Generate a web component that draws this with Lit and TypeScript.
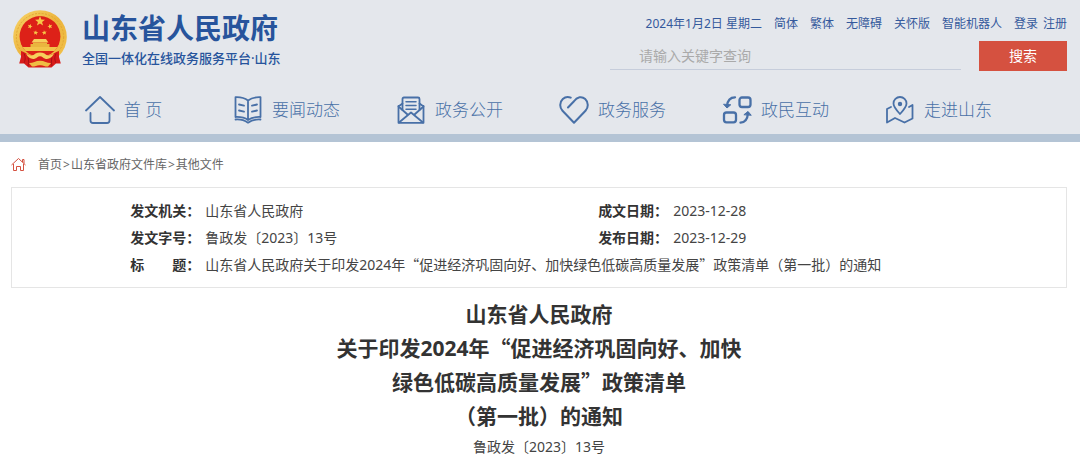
import { LitElement, html, css, svg } from "lit";
import { customElement } from "lit/decorators.js";

const star = (cx: number, cy: number, r: number, turn = 0) => {
  const points = Array.from({ length: 10 }, (_, i) => {
    const radius = i % 2 ? r * 0.42 : r;
    const angle = ((i * 36 - 90 + turn) * Math.PI) / 180;
    return `${(cx + radius * Math.cos(angle)).toFixed(2)},${(cy + radius * Math.sin(angle)).toFixed(2)}`;
  }).join(" ");
  return svg`<polygon points=${points} fill="#f7c948"></polygon>`;
};

const emblem = html`
  <svg class="emblem" viewBox="0 0 54 58" aria-hidden="true">
    <defs>
      <linearGradient id="gold" x1="0" y1="0" x2="1" y2="1">
        <stop offset="0" stop-color="#f8d56a"></stop>
        <stop offset="0.5" stop-color="#ecb43c"></stop>
        <stop offset="1" stop-color="#f3c34b"></stop>
      </linearGradient>
      <clipPath id="disc"><circle cx="27" cy="26.5" r="20.4"></circle></clipPath>
    </defs>
    <circle cx="27" cy="27" r="26.8" fill="url(#gold)"></circle>
    <circle cx="27" cy="27" r="23.6" fill="none" stroke="#e2a732" stroke-width="1" stroke-dasharray="2 1.4"></circle>
    <circle cx="27" cy="26.5" r="20.4" fill="#dd2118"></circle>
    <g clip-path="url(#disc)">
      <path d="M6 37 H48 V41 H6 Z" fill="#f2c44a"></path>
    </g>
    <path d="M20 30.500 L21 29 H33 L34 30.500 L35.500 32.400 H18.500 Z" fill="#f6cf5c"></path>
    <path d="M20 32.400 H34 V34 H36.500 V37 H17.500 V34 H20 Z" fill="#eab53e"></path>
    ${star(27, 11.3, 5.2)} ${star(17, 16.4, 2.6, 18)} ${star(37, 16.4, 2.6, -18)}
    ${star(22.7, 22.7, 2.6, 8)} ${star(31.3, 22.7, 2.6, -8)}
    <path d="M8 41 C11 41.500 14 44 17 45.500 H37 C40 44 43 41.500 46 41 L46 47 L47.800 53.500 L43 53.500 L38.500 57.500 H15.500 L11 53.500 L6.200 53.500 L8 47 Z" fill="#d81c1a"></path>
    <path d="M11 43.500 C13 47.500 12 51 11 53 M43 43.500 C41 47.500 42 51 43 53 M15 47.500 C16 51 15.500 54 15 56 M39 47.500 C38 51 38.500 54 39 56" fill="none" stroke="#a80f14" stroke-width="1"></path>
    <path d="M13 43.500 C17 46 20 46 22.500 43.500 C25 42 29 42 31.500 43.500 C34 46 37 46 41 43.500 C39 48.500 33.500 50.500 30 47.400 C28 46 26 46 24 47.400 C20.500 50.500 15 48.500 13 43.500 Z" fill="#f6cf5c"></path>
    <path d="M16 53 C19 53.500 22.500 50.800 27 50.800 C31.500 50.800 35 53.500 38 53 L35 56.500 C32.500 57 30 54.800 27 55.200 C24 54.800 21.500 57 19 56.500 Z" fill="#efbd44"></path>
  </svg>
`;

const icons = {
  home: svg`<path d="M1 15.5 15 2 29 15.5"></path><path d="M5.5 18 V25.5 Q5.5 28 8 28 H22 Q24.5 28 24.5 25.5 V18"></path>`,
  book: svg`<path d="M15 5.5 C11.5 2.8 7 2 2.5 2.2 V22 C7 21.8 11.5 22.5 15 25 C18.5 22.5 23 21.8 27.5 22 V2.2 C23 2 18.5 2.8 15 5.5 Z M15 5.5 V25"></path><path d="M6 9.5 11 10.7 M6 15.5 11 16.7 M24 9.5 19 10.7 M24 15.5 19 16.7"></path><path d="M2.5 24.5 C7 24.2 11.5 25.2 15 27.7 C18.5 25.2 23 24.2 27.5 24.5"></path>`,
  mail: svg`<path d="M2.5 11 V27.8 H27.5 V11"></path><path d="M6.5 8.5 2.5 11.5 11.5 19.5 M23.5 8.5 27.5 11.5 18.5 19.5"></path><path d="M3 27.5 15 17.5 27 27.5"></path><path d="M6.5 15 V4 Q6.5 2.5 8 2.5 H22 Q23.5 2.5 23.5 4 V15"></path><path d="M10 6.8 H20 M10 10.5 H20 M10 14.2 H20" stroke-width="1.5"></path>`,
  heart: svg`<path d="M9 12.5 15 6.200 C18 1.7 23 1 26.2 4 C29.7 7.3 29.5 12.5 26.5 15.7 L15 27.8 3.5 15.7 C0.5 12.5 0.3 7.3 3.8 4 C6 2 9 1.5 11.7 2.7" stroke-width="2"></path>`,
  swap: svg`<g stroke-width="2.3"><rect x="17.5" y="2.5" width="11" height="9.5" rx="2.5"></rect><rect x="2" y="17.5" width="12" height="9.8" rx="2.5"></rect><path d="M13 2.3 C8 2.3 5.500 5.5 5 11"></path><path d="M18.5 27.7 C23 27.5 25.5 24.5 26 18"></path></g><path d="M1.800 9.500 5 13 8.500 10 Z M22.200 19.500 26 16.500 29 20 Z" fill="currentColor" stroke-width="1"></path>`,
  map: svg`<path d="M15 19 C11 14.5 8.5 12 8.5 8.5 A6.5 6.5 0 0 1 21.5 8.5 C21.5 12 19 14.5 15 19 Z"></path><circle cx="15" cy="9" r="1.3" fill="currentColor"></circle><path d="M6 12 2 14 V27.5 L10 23 19.5 27.5 27.5 23.5 V10 L24 12"></path>`,
};

const navItems = [
  { icon: icons.home, label: "首 页" },
  { icon: icons.book, label: "要闻动态" },
  { icon: icons.mail, label: "政务公开" },
  { icon: icons.heart, label: "政务服务" },
  { icon: icons.swap, label: "政民互动" },
  { icon: icons.map, label: "走进山东" },
];

const tools = ["简体", "繁体", "无障碍", "关怀版", "智能机器人"];

@customElement("app-root")
export class AppRoot extends LitElement {
  static styles = css`
    :host {
      display: block;
      background: #fff;
      color: #333;
      font-family: "Noto Sans", "Noto Sans CJK SC", sans-serif;
      font-size: 14px;
      line-height: 27px;
    }
    a {
      color: inherit;
      text-decoration: none;
    }
    .header {
      background: #e4e7ec;
      border-bottom: 8px solid #b4c4d5;
    }
    .top {
      display: flex;
      justify-content: space-between;
      align-items: flex-start;
      padding: 10px 13px 0;
    }
    .brand {
      display: flex;
      gap: 15px;
      color: #27549c;
    }
    .emblem {
      width: 54px;
      height: 58px;
    }
    .name {
      margin: 0;
      font-size: 28px;
      line-height: 36px;
      font-weight: 700;
    }
    .platform {
      margin: 0;
      font-size: 13px;
      line-height: 24px;
      font-weight: 500;
    }
    .side {
      flex: 0 1 457px;
    }
    .tools {
      display: flex;
      justify-content: flex-end;
      gap: 12px;
      font-size: 12px;
      line-height: 27px;
      color: #34599c;
      white-space: nowrap;
    }
    .account {
      display: flex;
      gap: 5px;
    }
    .search {
      display: flex;
      gap: 18px;
      margin-top: 4px;
    }
    .field {
      flex: 1;
      min-width: 0;
      box-sizing: border-box;
      height: 29px;
      padding: 0 29px;
      border: 0;
      border-bottom: 1px solid #c6cddb;
      background: none;
      font: inherit;
      font-size: 14px;
      color: #333;
      outline: none;
    }
    .field::placeholder {
      color: #aaa;
      opacity: 1;
    }
    .submit {
      width: 88px;
      height: 30px;
      padding: 0;
      border: 0;
      background: #d55140;
      color: #fff;
      font: inherit;
      font-size: 14px;
      line-height: 30px;
    }
    .nav {
      display: grid;
      grid-template-columns: repeat(6, 1fr);
      padding: 18px 60px 3px 42px;
    }
    .item {
      display: flex;
      justify-content: center;
      align-items: center;
      gap: 9px;
      color: #4870a7;
      font-size: 17px;
      line-height: 42px;
      font-weight: 300;
    }
    .icon {
      width: 30px;
      height: 30px;
      fill: none;
      stroke: #4870a7;
      stroke-width: 1.8;
      stroke-linecap: round;
      stroke-linejoin: round;
    }
    .main {
      padding: 0 13px 0 11px;
    }
    .crumbs {
      display: flex;
      align-items: center;
      gap: 1px;
      padding: 9px 0;
      font-size: 12px;
      color: #666;
    }
    .home {
      width: 15px;
      height: 15px;
      margin-right: 11px;
      fill: none;
      stroke: #d55140;
      stroke-width: 1;
    }
    .facts {
      display: grid;
      grid-template-columns: 1fr 1fr;
      margin: 0;
      padding: 9px 0 9px 11.2%;
      border: 1px solid #e5e5e5;
    }
    .fact {
      display: flex;
      gap: 5px;
    }
    .wide {
      grid-column: 1 / -1;
    }
    .term {
      display: flex;
      justify-content: space-between;
      flex: 0 0 70px;
      font-weight: 700;
    }
    .value {
      margin: 0;
      color: #444;
    }
    .quote {
      font-family: "Noto Sans CJK SC", sans-serif;
      line-height: 1;
    }
    .title {
      margin: 9px 0 0;
      text-align: center;
      font-size: 21px;
      line-height: 34px;
      font-weight: 700;
    }
    .number {
      margin: 0;
      text-align: center;
      color: #444;
    }
  `;

  render() {
    const open = html`<span class="quote">“</span>`;
    const close = html`<span class="quote">”</span>`;
    return html`
      <header class="header">
        <div class="top">
          <div class="brand">
            ${emblem}
            <div>
              <p class="name">山东省人民政府</p>
              <p class="platform">全国一体化在线政务服务平台·山东</p>
            </div>
          </div>
          <div class="side">
            <div class="tools">
              <span>2024年1月2日 星期二</span>
              ${tools.map((t) => html`<a href="#">${t}</a>`)}
              <span class="account"><a href="#">登录</a><a href="#">注册</a></span>
            </div>
            <form class="search">
              <input class="field" type="text" aria-label="请输入关键字查询" placeholder="请输入关键字查询" />
              <button class="submit" type="button">搜索</button>
            </form>
          </div>
        </div>
        <nav class="nav">
          ${navItems.map(
            (n) => html`<a class="item" href="#"
              ><svg class="icon" viewBox="0 0 30 30" aria-hidden="true">${n.icon}</svg><span>${n.label}</span></a
            >`
          )}
        </nav>
      </header>
      <main class="main">
        <nav class="crumbs">
          <svg class="home" viewBox="0 0 15 15" aria-hidden="true">
            <path d="M0.5 8 7.5 1.5 14.5 8 M11.5 5 V2.5 H13 V6.5"></path>
            <path d="M2.5 7 V13.5 H5.5 V9.5 H9.5 V13.5 H12.5 V7"></path>
          </svg>
          <a href="#">首页</a><span>&gt;</span><a href="#">山东省政府文件库</a><span>&gt;</span><a href="#">其他文件</a>
        </nav>
        <dl class="facts">
          <div class="fact"><dt class="term">发文机关：</dt><dd class="value">山东省人民政府</dd></div>
          <div class="fact"><dt class="term">成文日期：</dt><dd class="value">2023-12-28</dd></div>
          <div class="fact"><dt class="term">发文字号：</dt><dd class="value">鲁政发〔2023〕13号</dd></div>
          <div class="fact"><dt class="term">发布日期：</dt><dd class="value">2023-12-29</dd></div>
          <div class="fact wide">
            <dt class="term"><span>标</span><span>题：</span></dt>
            <dd class="value">山东省人民政府关于印发2024年${open}促进经济巩固向好、加快绿色低碳高质量发展${close}政策清单（第一批）的通知</dd>
          </div>
        </dl>
        <h1 class="title">
          山东省人民政府<br />关于印发2024年${open}促进经济巩固向好、加快<br />绿色低碳高质量发展${close}政策清单<br />（第一批）的通知
        </h1>
        <p class="number">鲁政发〔2023〕13号</p>
      </main>
    `;
  }
}
